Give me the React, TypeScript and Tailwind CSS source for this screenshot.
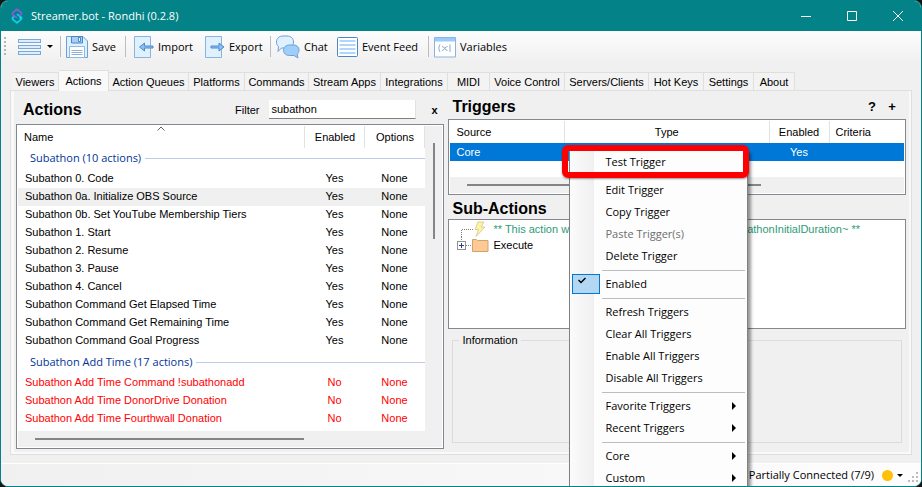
import type { ReactNode } from "react";

const ui = "font-['Open_Sans','Noto_Sans',sans-serif] text-[11px] leading-[16px]";
const classic = "font-['Liberation_Sans',Arial,sans-serif] text-[11px] leading-[14px]";
const heading = "text-[16px] leading-5 font-bold";

function Logo() {
  return (
    <svg width="12" height="16" viewBox="0 0 12 16" fill="none" strokeWidth="1.600" strokeLinejoin="round" aria-hidden="true">
      <path d="M8.500 9.500 10.500 11 6 14.800 1.500 11.200V9.800L3.500 8" stroke="#12d3ee" />
      <path d="M6 6.200l4.500 3.300V11" stroke="#12d3ee" />
      <path d="M10.500 6.200V4.800L6 1.200 1.500 4.800v1.500L6 9.800" stroke="#8a5be0" />
      <path d="M8.500 7.800 10.500 6.200" stroke="#8a5be0" />
    </svg>
  );
}

function MenuIcon() {
  return (
    <svg width="24" height="18" viewBox="0 0 24 18" fill="#dceeff" stroke="#79a9dc" aria-hidden="true">
      <rect x="0.5" y="1.5" width="22" height="3" />
      <rect x="0.5" y="7.500" width="22" height="3" />
      <rect x="0.5" y="13.5" width="22" height="3" />
    </svg>
  );
}

function SaveIcon() {
  return (
    <svg width="22" height="22" viewBox="0 0 22 22" fill="none" aria-hidden="true">
      <path d="M.5.5h16.500l4.500 4.500v16.500H.5z" fill="#dff0ff" stroke="#6b9fd6" />
      <path d="M5.500.5h11v6.500h-11z" fill="#a6cff8" stroke="#4d86c4" />
      <path d="M12.500 1.500h2v4h-2z" fill="#fff" stroke="#4d86c4" />
      <path d="M3.500 10.500h15v11h-15z" fill="#fff" stroke="#8db9e6" />
      <path d="M5.500 14.500h11M5.500 16.500h11M5.500 18.500h11" stroke="#8fb0d2" />
    </svg>
  );
}

function ImportIcon() {
  return (
    <svg width="20" height="22" viewBox="0 0 20 22" aria-hidden="true">
      <path d="M.5.5h16v21H.5z" fill="#dff0ff" stroke="#8ab4e0" />
      <path d="M5.500 11l5-4v3h8.500v2h-8.500v3z" fill="#8cbcf0" stroke="#4f8ccc" />
    </svg>
  );
}

function ExportIcon() {
  return (
    <svg width="20" height="22" viewBox="0 0 20 22" aria-hidden="true">
      <path d="M.5.5h16v21H.5z" fill="#dff0ff" stroke="#8ab4e0" />
      <path d="M19 11l-5-4v3H6v2h8v3z" fill="#8cbcf0" stroke="#4f8ccc" />
    </svg>
  );
}

function ChatIcon() {
  return (
    <svg width="24" height="24" viewBox="0 0 24 24" stroke="#6b9fd6" aria-hidden="true">
      <path d="M7 1h4c4 0 6.500 2.500 6.500 6s-2.500 6-6.500 6H5.500L2 16.500l.5-5C1 10.500.5 9 .5 7c0-3.500 2.500-6 6.500-6z" fill="#dff0ff" />
      <path d="M13.500 10h4c3.500 0 5.500 2.200 5.500 5 0 1.800-.7 3.200-1.800 4.200l.8 3.800-4-2.500h-4.500C10 20.500 7.500 18.300 7.500 15.300S10 10 13.500 10z" fill="#a0cefa" />
    </svg>
  );
}

function FeedIcon() {
  return (
    <svg width="21" height="20" viewBox="0 0 21 20" aria-hidden="true">
      <rect x=".5" y=".5" width="20" height="19" rx="1" fill="#fff" stroke="#4d86c4" />
      <path d="M2.500 4h16M2.500 8h16M2.500 12h16M2.500 16h16" stroke="#b0d6fb" strokeWidth="2" />
    </svg>
  );
}

function VariablesIcon() {
  return (
    <svg width="22" height="22" viewBox="0 0 22 22" fill="none" stroke="#8ab4e0" aria-hidden="true">
      <path d="M.5 1.500h21v19.500H.5z" fill="#fff" />
      <path d="M1 2h20v3.500H1z" fill="#9dcbf9" stroke="none" />
      <path d="M6 8.500c-1.500 2.500-1.500 5 0 7.500M16 8.500v7.500M8 10.500c3 0 3 4 5.500 4M13.500 10.500c-3 0-3 4-5.500 4" stroke="#8ba9c8" />
    </svg>
  );
}

function CaretDown() {
  return (
    <svg width="6" height="3" viewBox="0 0 6 3" aria-hidden="true">
      <path d="M0 0h6L3 3z" fill="#000" />
    </svg>
  );
}

function ToolButton({ icon, label, className }: { icon: ReactNode; label: string; className: string }) {
  return (
    <button type="button" className={`flex h-6 items-center gap-1 whitespace-nowrap ${className}`}>
      {icon}
      {label}
    </button>
  );
}

function Divider() {
  return <span className="h-[21px] w-px shrink-0 bg-[#bdbdbd]" />;
}

const tabs = [
  { name: "Viewers", width: "w-[47px]" },
  { name: "Actions", width: "w-[50px]" },
  { name: "Action Queues", width: "w-[80px]" },
  { name: "Platforms", width: "w-[56px]" },
  { name: "Commands", width: "w-[64px]" },
  { name: "Stream Apps", width: "w-[72px]" },
  { name: "Integrations", width: "w-[67px]" },
  { name: "MIDI", width: "w-[42px]" },
  { name: "Voice Control", width: "w-[75px]" },
  { name: "Servers/Clients", width: "w-[84px]" },
  { name: "Hot Keys", width: "w-[55px]" },
  { name: "Settings", width: "w-[50px]" },
  { name: "About", width: "w-[41px]" },
];

const groups = [
  {
    title: "Subathon (10 actions)",
    enabled: true,
    rows: [
      "Subathon 0. Code",
      "Subathon 0a. Initialize OBS Source",
      "Subathon 0b. Set YouTube Membership Tiers",
      "Subathon 1. Start",
      "Subathon 2. Resume",
      "Subathon 3. Pause",
      "Subathon 4. Cancel",
      "Subathon Command Get Elapsed Time",
      "Subathon Command Get Remaining Time",
      "Subathon Command Goal Progress",
    ],
  },
  {
    title: "Subathon Add Time (17 actions)",
    enabled: false,
    rows: [
      "Subathon Add Time Command !subathonadd",
      "Subathon Add Time DonorDrive Donation",
      "Subathon Add Time Fourthwall Donation",
    ],
  },
];

const selectedAction = "Subathon 0a. Initialize OBS Source";

function ActionsTable() {
  return (
    <table className="w-full table-fixed border-collapse text-left">
      <colgroup>
        <col />
        <col className="w-[60px]" />
        <col className="w-[60px]" />
      </colgroup>
      <thead>
        <tr className="h-5">
          <th className="p-0 font-normal">
            <div className="relative -mb-0.5 flex h-[22px] items-center border-r border-[#e2e2e2] pl-1.5">
              Name
              <svg className="absolute top-0 left-1/2 -translate-x-1/2" width="8" height="5" viewBox="0 0 8 5" fill="none" stroke="#606060" aria-hidden="true">
                <path d="M.5 4.500 4 1l3.500 3.500" />
              </svg>
            </div>
          </th>
          <th className="p-0 font-normal">
            <div className="-mb-0.5 flex h-[22px] items-center justify-center border-r border-[#e2e2e2]">Enabled</div>
          </th>
          <th className="p-0 font-normal">
            <div className="-mb-0.5 flex h-[22px] items-center justify-center border-r border-[#e2e2e2]">Options</div>
          </th>
        </tr>
      </thead>
      {groups.map((group) => (
        <tbody key={group.title} className={group.enabled ? "" : "text-[#ff0000]"}>
          <tr className="h-6">
            <th colSpan={3} className="p-0 font-normal">
              <div className={`flex items-center gap-1 pl-3 whitespace-nowrap text-[#003399] ${ui}`}>
                {group.title}
                <span className="h-px flex-1 bg-[#c0cbe4]" />
              </div>
            </th>
          </tr>
          {group.rows.map((row) => (
            <tr key={row} className={`h-[18px] ${row === selectedAction ? "bg-[#f0f0f0]" : ""}`}>
              <td className="p-0 pb-0.5 pl-[7px] whitespace-nowrap">{row}</td>
              <td className="p-0 pr-0.5 pb-0.5 text-center">{group.enabled ? "Yes" : "No"}</td>
              <td className="p-0 pr-0.5 pb-0.5 text-center">None</td>
            </tr>
          ))}
        </tbody>
      ))}
    </table>
  );
}

function TriggersTable() {
  return (
    <table className="w-full table-fixed border-collapse text-left">
      <colgroup>
        <col className="w-[114px]" />
        <col />
        <col className="w-[60px]" />
        <col className="w-[75px]" />
      </colgroup>
      <thead>
        <tr className="h-[22px]">
          <th className="border-r border-[#e2e2e2] p-0 pl-1.5 font-normal">Source</th>
          <th className="border-r border-[#e2e2e2] p-0 text-center font-normal">Type</th>
          <th className="border-r border-[#e2e2e2] p-0 text-center font-normal">Enabled</th>
          <th className="p-0 pl-1.5 font-normal">Criteria</th>
        </tr>
      </thead>
      <tbody>
        <tr className="h-[18px] bg-[#0078d7] text-white">
          <td className="p-0 pl-1.5">Core</td>
          <td className="p-0" />
          <td className="p-0 text-center">Yes</td>
          <td className="p-0" />
        </tr>
      </tbody>
    </table>
  );
}

type Item = { label: string; disabled?: boolean; checked?: boolean; submenu?: boolean };

const menuSections: Item[][] = [
  [{ label: "Test Trigger" }],
  [
    { label: "Edit Trigger" },
    { label: "Copy Trigger" },
    { label: "Paste Trigger(s)", disabled: true },
    { label: "Delete Trigger" },
  ],
  [{ label: "Enabled", checked: true }],
  [
    { label: "Refresh Triggers" },
    { label: "Clear All Triggers" },
    { label: "Enable All Triggers" },
    { label: "Disable All Triggers" },
  ],
  [
    { label: "Favorite Triggers", submenu: true },
    { label: "Recent Triggers", submenu: true },
  ],
  [
    { label: "Core", submenu: true },
    { label: "Custom", submenu: true },
  ],
];

function ContextMenu() {
  return (
    <div
      role="menu"
      className={`absolute top-[59px] left-[121px] z-10 w-[179px] border border-[#808080] bg-[#fdfdfd] shadow-[3px_3px_3px_rgba(0,0,0,0.4)] ${ui}`}
    >
      <div className="bg-[linear-gradient(to_right,#fbfbfb,#f0f0f0_24px,#fdfdfd_24px)]">
        {menuSections.map((section, i) => (
          <div key={section[0].label}>
            {i > 0 && (
              <div className="flex h-1.5 items-center pr-0.5 pl-8">
                <span className="h-px flex-1 bg-[#bdbdbd]" />
              </div>
            )}
            {section.map((item) => (
              <button
                key={item.label}
                type="button"
                role={item.checked ? "menuitemcheckbox" : "menuitem"}
                aria-checked={item.checked}
                disabled={item.disabled}
                className={`flex h-[22px] w-full items-center pr-[11px] pl-0.5 text-left ${item.disabled ? "text-[#6d6d6d]" : "text-black"}`}
              >
                {item.checked ? (
                  <span className="mr-[5px] flex h-5 w-7 justify-center border border-[#0078d7] bg-[#b3d7f3] pr-2">
                    <svg width="8" height="7" viewBox="0 0 8 7" className="mt-0.5" fill="none" stroke="#000" strokeWidth="1.500" aria-hidden="true">
                      <path d="M.5 3 3 5.500 7.500 1" />
                    </svg>
                  </span>
                ) : (
                  <span className="mr-[5px] w-7" />
                )}
                <span className="flex-1">{item.label}</span>
                {item.submenu && (
                  <svg width="4" height="8" viewBox="0 0 4 8" aria-hidden="true">
                    <path d="M0 0l4 4-4 4z" />
                  </svg>
                )}
              </button>
            ))}
          </div>
        ))}
      </div>
      <span className="pointer-events-none absolute -top-1.5 -left-2 h-[33px] w-[187px] rounded-md border-6 border-[#ff0000] shadow-[0_1px_2px_rgba(0,0,0,0.4)]" />
    </div>
  );
}

function TriggersPanel() {
  return (
    <section className="relative flex min-w-0 flex-[457] flex-col">
      <header className="flex h-7 items-center pt-1 pr-1 pl-1">
        <h2 className={`flex-1 ${heading}`}>Triggers</h2>
        <button type="button" className="w-5 text-[13px] font-bold">?</button>
        <button type="button" className="w-5 text-[13px] font-bold">+</button>
      </header>
      <div className="flex h-[76px] flex-col border border-[#828790] bg-white p-px">
        <TriggersTable />
        <div className="mt-auto flex h-4 shrink-0 items-center bg-[#f0f0f0] px-[17px]">
          <span className="h-0.5 w-[70%] bg-[#858585]" />
        </div>
      </div>
      <h2 className={`h-6 pt-1 pl-1 ${heading}`}>Sub-Actions</h2>
      <div className="min-h-[110px] flex-1 border border-[#828790] bg-white py-px pr-[45px] pl-2">
        <div className="flex h-4 items-center text-[#2e9b78]">
          <svg width="32" height="16" viewBox="0 0 32 16" aria-hidden="true">
            <path d="M4.500 16V8.500H16" fill="none" stroke="#808080" strokeDasharray="1 1" />
            <path d="M21 1h6l-3 5h4l-9 9.500 2.500-7H18z" fill="#fdf3a0" stroke="#d9cf9c" />
          </svg>
          <span className="flex flex-1 justify-between pl-1 whitespace-nowrap">
            <span>** This action will</span>
            <span>~subathonInitialDuration~ **</span>
          </span>
        </div>
        <div className="flex h-4 items-center">
          <svg width="32" height="16" viewBox="0 0 32 16" aria-hidden="true">
            <path d="M4.500 0v4M9 8.500h6" stroke="#808080" strokeDasharray="1 1" />
            <rect x=".5" y="4.500" width="8" height="8" fill="#fff" stroke="#919191" />
            <path d="M2 8.500h5M4.500 6v5" stroke="#27408b" />
            <path d="M15.500 2.500h4l1 1h10.500v11H15.500z" fill="#fec993" stroke="#cda374" />
          </svg>
          <span className="pl-1">Execute</span>
        </div>
      </div>
      <fieldset className="mx-1 mt-1 mb-[9px] h-[110px] border border-[#dcdcdc] pl-1.5">
        <legend className="px-[3px]">Information</legend>
      </fieldset>
      <ContextMenu />
    </section>
  );
}

function ActionsPanel() {
  return (
    <section className="flex min-w-0 flex-[428] flex-col">
      <header className="flex h-[33px] items-center pt-1 pr-1.5 pl-[7px]">
        <h2 className={`flex-1 ${heading}`}>Actions</h2>
        <label htmlFor="filter" className="pr-2.5">Filter</label>
        <input
          id="filter"
          type="text"
          defaultValue="subathon"
          className="h-[19px] w-[147px] border-r border-b border-r-[#e2e2e2] border-b-[#808080] bg-white px-0.5 outline-none"
        />
        <button type="button" aria-label="Clear filter" className="ml-3.5 w-2 font-bold">x</button>
      </header>
      <div className="mb-[3px] flex flex-1 flex-col border border-[#828790] bg-white p-px">
        <div className="flex flex-1">
          <div className="min-w-0 flex-1">
            <ActionsTable />
          </div>
          <div className="flex w-[17px] flex-col items-center bg-[#f0f0f0] pt-[17px]">
            <span className="h-24 w-0.5 bg-[#858585]" />
          </div>
        </div>
        <div className="flex h-4 items-center bg-[#f0f0f0] px-[17px]">
          <span className="h-0.5 w-[69%] bg-[#858585]" />
        </div>
      </div>
    </section>
  );
}

export default function App() {
  return (
    <div className="min-h-screen bg-[#151515]">
      <div className={`flex min-h-screen flex-col overflow-hidden rounded-lg border border-[#038387] bg-[#f0f0f0] text-black ${classic}`}>
        <header className={`flex h-[30px] shrink-0 items-center bg-[#038387] pl-2.5 text-white ${ui}`}>
          <Logo />
          <h1 className="flex-1 pl-2">Streamer.bot - Rondhi (0.2.8)</h1>
          <button type="button" aria-label="Minimize" className="flex h-full w-[46px] items-center justify-center">
            <svg width="10" height="10" viewBox="0 0 10 10" stroke="#fff"><path d="M0 5.500h10" /></svg>
          </button>
          <button type="button" aria-label="Maximize" className="flex h-full w-[46px] items-center justify-center">
            <svg width="10" height="10" viewBox="0 0 10 10" stroke="#fff" fill="none"><path d="M.5.5h9v9h-9z" /></svg>
          </button>
          <button type="button" aria-label="Close" className="flex h-full w-[46px] items-center justify-center">
            <svg width="10" height="10" viewBox="0 0 10 10" stroke="#fff"><path d="M0 0l10 10M10 0 0 10" /></svg>
          </button>
        </header>

        <nav aria-label="Tools" className={`flex h-[31px] shrink-0 items-center bg-linear-to-b from-[#fdfdfd] to-[#f0f0f0] pl-[3px] ${ui}`}>
          <span className="h-5 w-0.5 bg-[repeating-linear-gradient(to_bottom,#b5b5b5_0_2px,transparent_2px_4px)]" />
          <button type="button" aria-label="Menu" className="flex h-6 w-[54px] items-center gap-[5px] pl-3">
            <MenuIcon />
            <CaretDown />
          </button>
          <Divider />
          <ToolButton icon={<SaveIcon />} label="Save" className="w-[64px] pl-[5px]" />
          <Divider />
          <ToolButton icon={<ImportIcon />} label="Import" className="w-[71px] pl-2" />
          <ToolButton icon={<ExportIcon />} label="Export" className="w-[73px] pl-2" />
          <Divider />
          <ToolButton icon={<ChatIcon />} label="Chat" className="w-[58px] pl-[5px]" />
          <ToolButton icon={<FeedIcon />} label="Event Feed" className="w-[99px] pl-2" />
          <Divider />
          <ToolButton icon={<VariablesIcon />} label="Variables" className="w-[80px] pl-[5px]" />
        </nav>

        <main className="flex flex-1 flex-col px-[9px] pt-2">
          <div role="tablist" className="z-1 -mb-px flex items-end px-0.5">
            {tabs.map((tab) => {
              const active = tab.name === "Actions";
              return (
                <button
                  key={tab.name}
                  type="button"
                  role="tab"
                  aria-selected={active}
                  className={`flex shrink-0 items-center justify-center border-t border-r border-[#dfdfdf] whitespace-nowrap ${tab.width} ${
                    active ? "h-[21px] bg-[#f9f9f9]" : "h-[19px] border-b bg-[#f3f3f3]"
                  }`}
                >
                  {tab.name}
                </button>
              );
            })}
          </div>
          <div className="flex flex-1 flex-col border border-[#dfdfdf] bg-[#f9f9f9] pr-0.5 pb-0.5 pl-[3px]">
            <div className="flex flex-1 gap-1 bg-[#f0f0f0] pr-[3px] pl-0.5">
              <ActionsPanel />
              <TriggersPanel />
            </div>
          </div>
        </main>

        <footer className={`mt-2 flex h-[23px] shrink-0 items-center justify-end border-t border-white bg-linear-to-r from-[#f0f0f0] to-[#fdfdfd] pr-0.5 ${ui}`}>
          <span className="pr-2">Partially Connected (7/9)</span>
          <span className="mr-1 size-[11px] rounded-full bg-[#ffc107]" />
          <CaretDown />
          <svg className="mt-1 ml-1" width="12" height="12" viewBox="0 0 12 12" fill="#bdbdbd" aria-hidden="true">
            <path d="M9 1h2v2H9zM5 5h2v2H5zM9 5h2v2H9zM1 9h2v2H1zM5 9h2v2H5zM9 9h2v2H9z" />
          </svg>
        </footer>
      </div>
    </div>
  );
}
